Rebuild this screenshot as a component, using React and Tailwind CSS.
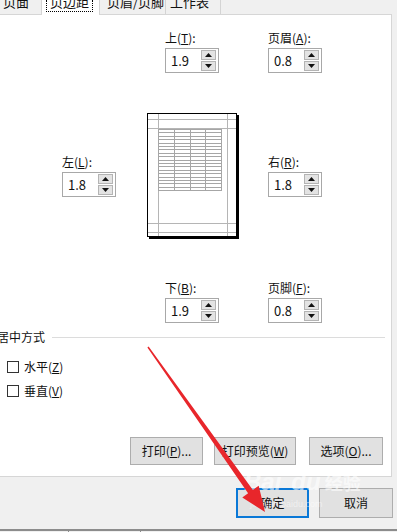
import React from "react";

const F = "font-['Noto_Sans_CJK_SC','Noto_Sans',sans-serif]";

function Tri({ down }) {
  return (
    <svg width="7" height="4" viewBox="0 0 7 4" className="block">
      {down ? <path d="M0 0 L7 0 L3.5 4 Z" fill="#111" /> : <path d="M3.5 0 L7 4 L0 4 Z" fill="#111" />}
    </svg>
  );
}

function Spin({ value }) {
  return (
    <div className="w-[54px] h-[25px] border border-[#a8a8a8] bg-white flex items-center justify-between pl-[5px] pr-[2px]">
      <span className="text-[13px] leading-none text-[#111]">{value}</span>
      <div className="flex flex-col gap-[1px]">
        <div className="w-[15px] h-[10px] bg-[#e3e3e3] border border-[#b4b4b4] flex items-center justify-center">
          <Tri />
        </div>
        <div className="w-[15px] h-[10px] bg-[#e3e3e3] border border-[#b4b4b4] flex items-center justify-center">
          <Tri down />
        </div>
      </div>
    </div>
  );
}

function Field({ name, k, value, className = "" }) {
  return (
    <div className={"flex flex-col " + className}>
      <div className="h-[14px] leading-[14px] text-[12px] text-[#111]">
        {name}(<span className="underline">{k}</span>):
      </div>
      <div className="mt-[3px]">
        <Spin value={value} />
      </div>
    </div>
  );
}

function Page() {
  const rows = [];
  for (let i = 0; i <= 18; i++) rows.push(15 + i * 3.4);
  return (
    <div className="w-[90px] h-[124px] bg-white border border-black shadow-[2px_2px_0_#000] shrink-0">
      <svg width="88" height="122" viewBox="0 0 88 122" className="block">
        <g stroke="#b5b5b5" strokeWidth="1" shapeRendering="crispEdges">
          <line x1="10.5" y1="0" x2="10.5" y2="122" />
          <line x1="79.5" y1="0" x2="79.5" y2="122" />
          <line x1="0" y1="5.5" x2="88" y2="5.5" />
          <line x1="0" y1="14.5" x2="88" y2="14.5" />
          <line x1="0" y1="109.5" x2="88" y2="109.5" />
          <line x1="0" y1="118.5" x2="88" y2="118.5" />
        </g>
        <g stroke="#a6a6a6" strokeWidth="1" shapeRendering="crispEdges">
          {rows.map((y, i) => (
            <line key={i} x1="10.5" y1={Math.round(y) + 0.5} x2="73.5" y2={Math.round(y) + 0.5} />
          ))}
          {[10.5, 26.5, 42.5, 57.5, 73.5].map((x, i) => (
            <line key={"c" + i} x1={x} y1="14.5" x2={x} y2="76.5" />
          ))}
        </g>
      </svg>
    </div>
  );
}

function Btn({ children, w, primary }) {
  return (
    <div
      className={
        "h-[28px] flex items-center justify-center text-[12px] text-[#111] bg-[#e1e1e1] " +
        (primary ? "border-2 border-[#0a78d7] " : "border border-[#adadad] ") +
        w
      }
    >
      {children}
    </div>
  );
}

export default function App() {
  return (
    <div className={"relative w-[397px] h-[532px] bg-[#f0f0f0] overflow-hidden flex flex-col " + F}>
      {/* tabs */}
      <div className="h-[14px] flex items-start text-[13px] text-[#111] relative z-10">
        <div className="w-[42px] h-[14px] overflow-hidden border-r border-[#d4d4d4] pl-[3px]">
          <div className="-mt-[5px] leading-[13px]">页面</div>
        </div>
        <div className="w-[58px] h-[15px] overflow-hidden bg-white border-r border-[#d4d4d4] pl-[4px]">
          <div className="w-[47px] h-[12px] border-x border-b border-dotted border-black flex justify-center">
            <div className="-mt-[5px] leading-[13px]">页边距</div>
          </div>
        </div>
        <div className="w-[66px] h-[14px] overflow-hidden border-r border-[#d4d4d4] pl-[7px]">
          <div className="-mt-[5px] leading-[13px]">页眉/页脚</div>
        </div>
        <div className="w-[55px] h-[14px] overflow-hidden border-r border-[#d4d4d4] pl-[4px]">
          <div className="-mt-[5px] leading-[13px]">工作表</div>
        </div>
      </div>

      {/* panel */}
      <div className="w-[392px] h-[463px] bg-white border-t border-r border-b border-[#d6d6d6] flex flex-col shrink-0">
        <div className="mt-[16px] flex pl-[165px] gap-[49px]">
          <Field name="上" k="T" value="1.9" />
          <Field name="页眉" k="A" value="0.8" />
        </div>
        <div className="mt-[40px] flex items-start pl-[62px]">
          <Field name="左" k="L" value="1.8" className="mt-[42px]" />
          <div className="ml-[31px]">
            <Page />
          </div>
          <Field name="右" k="R" value="1.8" className="mt-[42px] ml-[31px]" />
        </div>
        <div className="mt-[44px] flex pl-[165px] gap-[49px]">
          <Field name="下" k="B" value="1.9" />
          <Field name="页脚" k="F" value="0.8" />
        </div>
        <div className="mt-[7px] h-[14px] flex items-center -ml-[3px] pr-[6px]">
          <span className="text-[12px] leading-[14px] text-[#111]">居中方式</span>
          <div className="ml-[7px] flex-1 h-px bg-[#dcdcdc]" />
        </div>
        <div className="mt-[16px] h-[14px] flex items-center pl-[7px] text-[12px] text-[#111]">
          <div className="w-[12px] h-[12px] border border-[#333] bg-white" />
          <span className="ml-[5px]">水平(<span className="underline">Z</span>)</span>
        </div>
        <div className="mt-[10px] h-[14px] flex items-center pl-[7px] text-[12px] text-[#111]">
          <div className="w-[12px] h-[12px] border border-[#333] bg-white" />
          <span className="ml-[5px]">垂直(<span className="underline">V</span>)</span>
        </div>
        <div className="mt-[39px] flex justify-end pr-[8px]">
          <Btn w="w-[73px]">打印(<span className="underline">P</span>)...</Btn>
          <div className="ml-[11px]">
            <Btn w="w-[82px]">打印预览(<span className="underline">W</span>)</Btn>
          </div>
          <div className="ml-[13px]">
            <Btn w="w-[74px]">选项(<span className="underline">O</span>)...</Btn>
          </div>
        </div>
      </div>

      {/* bottom band */}
      <div className="h-[52px] flex items-start justify-end pt-[11px] pr-[4px] shrink-0">
        <div className="h-[30px] w-[73px] flex items-center justify-center text-[12px] text-[#111] bg-[#e1e1e1] border-2 border-[#0a78d7]">
          确定
        </div>
        <div className="ml-[10px] h-[30px] w-[74px] flex items-center justify-center text-[12px] text-[#111] bg-[#e1e1e1] border border-[#adadad]">
          取消
        </div>
      </div>
      <div className="h-[3px] flex border-t-2 border-[#8c8c8c] shrink-0">
        <div className="w-[69px] border-r border-[#8c8c8c]" />
        <div className="w-[72px] border-r border-[#8c8c8c]" />
      </div>

      {/* watermark */}
      <div className="absolute left-[244px] top-[470px] text-white/60 font-bold text-[24px] leading-none italic font-['Liberation_Sans',sans-serif] pointer-events-none">
        Bai<span className="ml-[10px]">du</span>
        <span className="text-[18px] not-italic ml-[4px] font-['Noto_Sans_CJK_SC',sans-serif]">经验</span>
      </div>
      <div className="absolute left-[250px] top-[500px] text-white/50 text-[9px] leading-none font-['Liberation_Sans',sans-serif] pointer-events-none">
        jingyan.baidu.com
      </div>

      {/* red arrow */}
      <svg className="absolute left-0 top-0 pointer-events-none" width="397" height="532" viewBox="0 0 397 532">
        <polygon
          points="148.6,346.6 252.9,489.9 258.7,485.8 265,512 242.3,497.4 248.1,493.3 147.4,347.4"
          fill="#e8262b"
        />
      </svg>
    </div>
  );
}
